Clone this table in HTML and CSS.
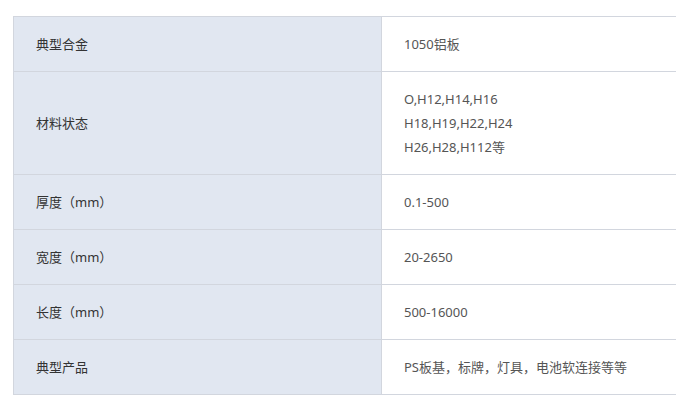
FILE: index.html
```html
<!DOCTYPE html>
<html lang="zh-CN">
<head>
<meta charset="utf-8">
<link rel="stylesheet" href="styles.css">
</head>
<body>
<div class="wrap">
<table class="spec">
<tbody>
<tr><th>典型合金</th><td>1050铝板</td></tr>
<tr><th>材料状态</th><td>O,H12,H14,H16<br>H18,H19,H22,H24<br>H26,H28,H112等</td></tr>
<tr><th>厚度（mm）</th><td>0.1-500</td></tr>
<tr><th>宽度（mm）</th><td>20-2650</td></tr>
<tr><th>长度（mm）</th><td>500-16000</td></tr>
<tr><th>典型产品</th><td>PS板基，标牌，灯具，电池软连接等等</td></tr>
</tbody>
</table>
</div>
</body>
</html>
```

FILE: styles.css
```css
html, body {
  margin: 0;
  padding: 0;
  background: #fff;
  overflow: hidden;
}
.wrap {
  padding: 16px 0 0 13px;
  overflow: hidden;
}
.spec {
  border-collapse: collapse;
  width: 740px;
  font-family: "Noto Sans", "Noto Sans CJK SC", sans-serif;
  font-size: 13px;
  line-height: 24px;
  table-layout: fixed;
}
.spec th, .spec td {
  border: 1px solid #d2d6de;
  padding: 15px 22px;
  text-align: left;
  vertical-align: middle;
  font-weight: normal;
}
.spec th {
  width: 323px;
  background: #e1e7f1;
  color: #333;
}
.spec td {
  color: #555;
  background: #fff;
}
```
